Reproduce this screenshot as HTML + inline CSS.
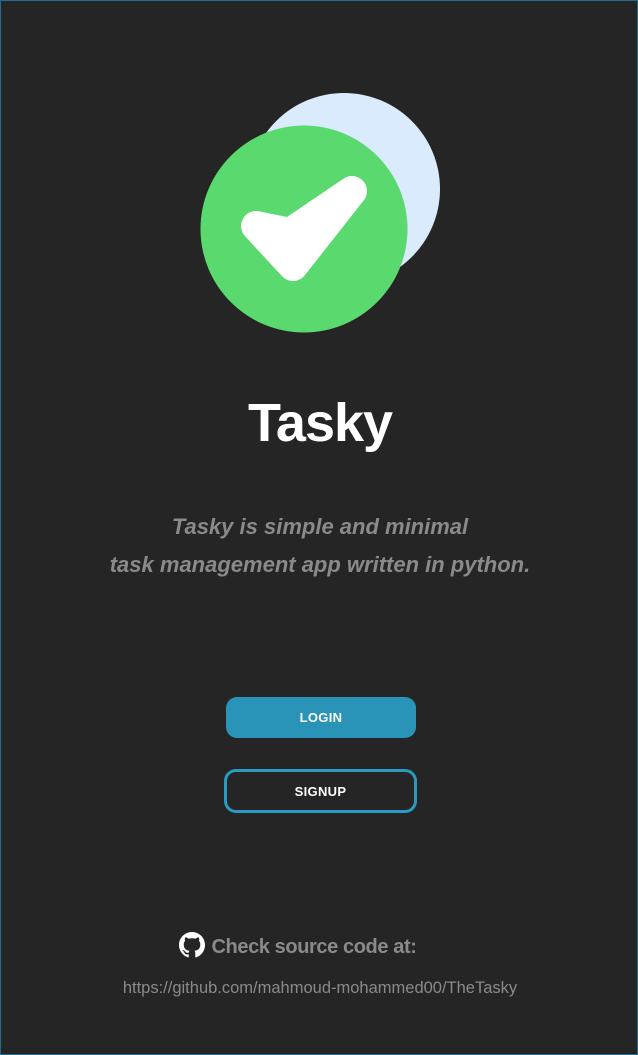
<!DOCTYPE html>
<html><head><style>
html,body{margin:0;padding:0}
body{width:638px;height:1055px;background:#252525;position:relative;overflow:hidden;font-family:"Liberation Sans",sans-serif;box-sizing:border-box;border:1px solid #1f6d8f}
.abs{position:absolute;left:0;width:638px;text-align:center}
.btn{position:absolute;box-sizing:border-box;font-weight:bold;font-size:13px;color:#fff;display:flex;align-items:center;justify-content:center;letter-spacing:0.3px}
</style></head><body>
<svg width="638" height="360" style="position:absolute;left:0;top:0">
<circle cx="343" cy="188" r="96" fill="#d9ebfc"/>
<circle cx="303" cy="228" r="103.5" fill="#5ad96e"/>
<polygon points="255,225 289,232 351,190 292,265" fill="#fff" stroke="#fff" stroke-width="30" stroke-linejoin="round"/>
</svg>
<div class="abs" style="top:391px;font-size:54px;font-weight:bold;color:#fff;letter-spacing:-1px">Tasky</div>
<div class="abs" style="top:507px;font-size:22px;font-weight:bold;font-style:italic;color:#8a8a8a;line-height:38px;letter-spacing:0px">Tasky is simple and minimal<br>task management app written in python.</div>
<div class="btn" style="left:225px;top:696px;width:190px;height:41px;background:#2a93b8;border-radius:11px">LOGIN</div>
<div class="btn" style="left:223px;top:768px;width:193px;height:44px;border:3px solid #2a9ac0;border-radius:12px">SIGNUP</div>
<div class="abs" style="top:931px;font-size:20px;font-weight:bold;color:#8a8a8a;left:-17px;letter-spacing:-0.4px">
<svg width="26" height="26" viewBox="0 0 16 16" style="vertical-align:-5px;margin-right:6px;margin-left:-10px"><path fill="#fff" d="M8 0C3.58 0 0 3.58 0 8c0 3.54 2.29 6.53 5.47 7.59.4.07.55-.17.55-.38 0-.19-.01-.82-.01-1.49-2.01.37-2.53-.49-2.69-.94-.09-.23-.48-.94-.82-1.13-.28-.15-.68-.52-.01-.53.63-.01 1.08.58 1.23.82.72 1.21 1.87.87 2.33.66.07-.52.28-.87.51-1.07-1.78-.2-3.64-.89-3.64-3.95 0-.87.31-1.59.82-2.15-.08-.2-.36-1.02.08-2.12 0 0 .67-.21 2.2.82.64-.18 1.32-.27 2-.27.68 0 1.36.09 2 .27 1.53-1.04 2.2-.82 2.2-.82.44 1.1.16 1.92.08 2.12.51.56.82 1.27.82 2.15 0 3.07-1.87 3.75-3.65 3.95.29.25.54.73.54 1.48 0 1.07-.01 1.93-.01 2.2 0 .21.15.46.55.38A8.013 8.013 0 0016 8c0-4.42-3.58-8-8-8z"/></svg>Check source code at:</div>
<div class="abs" style="top:978px;font-size:16.5px;color:#8a8a8a">https://github.com/mahmoud-mohammed00/TheTasky</div>
</body></html>
